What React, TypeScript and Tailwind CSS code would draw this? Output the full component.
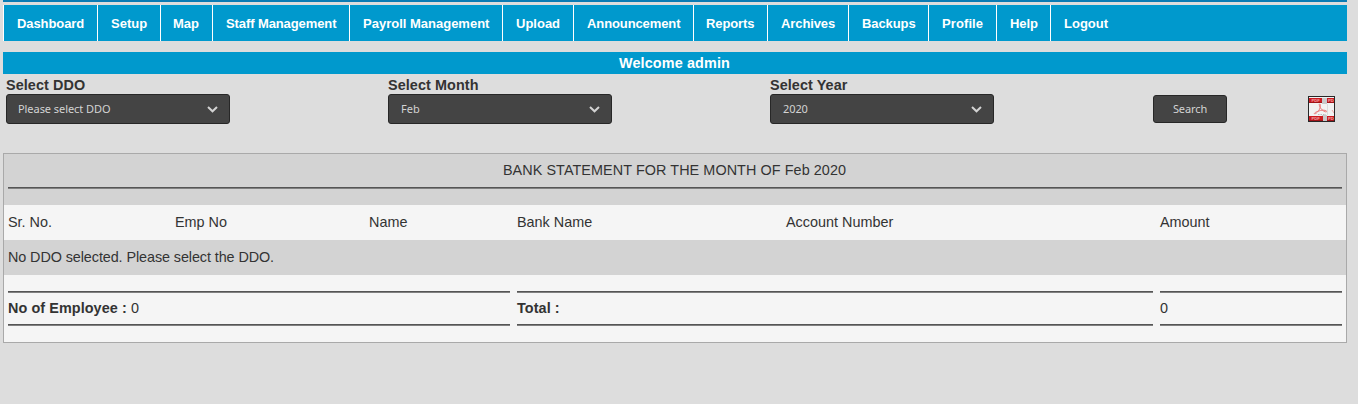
import React from "react";

const menu: { label: string; cls: string }[] = [
  { label: "Dashboard", cls: "w-[94px] pl-[13px] tracking-[-0.08px]" },
  { label: "Setup", cls: "w-[63px] pl-[13px]" },
  { label: "Map", cls: "w-[52px] pl-3" },
  { label: "Staff Management", cls: "w-[137px] pl-[13px] tracking-[-0.1px]" },
  { label: "Payroll Management", cls: "w-[153px] pl-[13px]" },
  { label: "Upload", cls: "w-[71px] pl-[13px]" },
  { label: "Announcement", cls: "w-[120px] pl-[13px] tracking-[-0.1px]" },
  { label: "Reports", cls: "w-[74px] pl-3 tracking-[-0.1px]" },
  { label: "Archives", cls: "w-[81px] pl-[13px] tracking-[-0.1px]" },
  { label: "Backups", cls: "w-[80px] pl-[13px] tracking-[-0.08px]" },
  { label: "Profile", cls: "w-[68px] pl-[13px] tracking-[0.1px]" },
  { label: "Help", cls: "w-[54px] pl-[13px] tracking-[-0.1px]" },
  { label: "Logout", cls: "w-[90px] pl-[13px]" },
];

function Field({ label, value, cls }: { label: string; value: string; cls: string }) {
  return (
    <div className="w-[382px] shrink-0">
      <div className="h-5 pt-[3px] text-[14.4px] leading-4 font-bold tracking-[0.08px]">{label}</div>
      <button
        className={`flex h-[30px] w-[224px] items-center justify-between rounded-[3px] border border-[#272727] bg-[#444] pr-[11px] font-['Noto_Sans',sans-serif] text-[11px] text-[#d3d3d3] ${cls}`}
      >
        <span>{value}</span>
        <svg width="11" height="7" viewBox="0 0 11 7" fill="none">
          <path d="M1 1 L5.5 5.3 L10 1" stroke="#d3d3d3" strokeWidth="2" />
        </svg>
      </button>
    </div>
  );
}

function Rule() {
  return <div className="h-[2px] border-t border-b border-t-[#555] border-b-[#808080]" />;
}

function PdfLabel({ x, y, width, text }: { x: number; y: number; width: number; text: string }) {
  return (
    <g transform={`translate(${x} ${y})`}>
      <rect width={width} height="5" fill="#cb1a20" />
      <rect y="4" width={width} height="1" fill="#a01318" />
      <text x={width > 10 ? 2.5 : 1} y="4.2" fontSize="4.2" fontWeight="700" fontFamily="Liberation Sans, sans-serif" fill="#efa5a5">
        {text}
      </text>
    </g>
  );
}

function PdfIcon() {
  return (
    <svg width="25" height="24" viewBox="0 0 25 24">
      <rect width="25" height="24" fill="#f2f2f2" />
      <path d="M13 1h5v6h-5zM13 18h5v6h-5z" fill="#c9c9c9" />
      <PdfLabel x={0} y={1} width={13} text="PDF" />
      <PdfLabel x={18} y={1} width={7} text="PD" />
      <PdfLabel x={0} y={19} width={14} text="PDF" />
      <PdfLabel x={18} y={19} width={7} text="PD" />
      <path
        d="M10.5 7 C11.5 6.5 11.5 9 11 11 C10 14 7 17 5.5 16.8 C4.5 16 9 13.8 13 13.2 C16 13 18.5 13.8 17.5 14.8 C16 15.5 12 12.5 11 10 C10.2 8 10 7.4 10.5 7"
        fill="none"
        stroke="#ea7a7a"
        strokeWidth="1"
      />
      <path d="M9 17.5h8" stroke="#a9a9b3" strokeWidth="0.8" strokeDasharray="1.5 1" />
      <path d="M18.5 7v11" stroke="#dcdcdc" strokeWidth="1" />
      <path d="M23 13l2 3" stroke="#f0a5a5" strokeWidth="1" />
    </svg>
  );
}

function Total({ cls, children }: { cls: string; children: React.ReactNode }) {
  return (
    <div className={cls}>
      <Rule />
      <div className="h-[31px] pt-[7px] leading-4 tracking-[0.08px]">{children}</div>
      <Rule />
    </div>
  );
}

export default function App() {
  return (
    <div className="h-[404px] w-full overflow-hidden bg-[#ddd] pr-[11px] pl-[3px] font-['Liberation_Sans',Arial,sans-serif] text-[14.4px] text-[#333]">
      <div className="h-[2px] bg-[#0a7cb4]" />
      <nav className="mt-[3px] flex h-9 bg-[#0099cd] text-[13px] font-bold text-white">
        {menu.map((m) => (
          <a key={m.label} className={`h-9 shrink-0 border-l border-white leading-[38px] whitespace-nowrap ${m.cls}`}>
            {m.label}
          </a>
        ))}
      </nav>
      <div className="mt-[11px] h-[22px] bg-[#0099cd] pr-px text-center leading-[22px] font-bold tracking-[0.13px] text-white">
        Welcome admin
      </div>

      <div className="flex h-[79px] pl-[3px]">
        <Field label="Select DDO" value="Please select DDO" cls="pl-[11px] tracking-[-0.06px]" />
        <Field label="Select Month" value="Feb" cls="pl-3" />
        <Field label="Select Year" value="2020" cls="pl-3 tracking-[-0.1px]" />
        <button className="mt-[21px] ml-px h-7 w-[74px] shrink-0 rounded-[3px] border border-[#272727] bg-[#444] font-['Noto_Sans',sans-serif] text-[11px] tracking-[-0.1px] text-[#d3d3d3]">
          Search
        </button>
        <button className="mt-[22px] ml-[81px] h-[26px] w-[27px] shrink-0 border border-[#272727]">
          <PdfIcon />
        </button>
      </div>

      <div className="h-[190px] border border-[#a9a9a9] bg-[#f5f5f5]">
        <div className="h-[51px] bg-[#d3d3d3] px-1">
          <div className="h-[33px] pr-px text-center leading-[33px] tracking-[0.07px]">
            BANK STATEMENT FOR THE MONTH OF Feb 2020
          </div>
          <Rule />
        </div>
        <div className="flex h-[35px] pl-1 leading-[35px]">
          <div className="w-[167px]">Sr. No.</div>
          <div className="w-[194px]">Emp No</div>
          <div className="w-[148px]">Name</div>
          <div className="w-[269px]">Bank Name</div>
          <div className="w-[374px]">Account Number</div>
          <div>Amount</div>
        </div>
        <div className="h-[35px] bg-[#d3d3d3] pl-1 leading-[35px] tracking-[-0.09px]">
          No DDO selected. Please select the DDO.
        </div>
        <div className="flex gap-[7px] px-1 pt-4">
          <Total cls="w-[502px]">
            <b>No of Employee :</b> 0
          </Total>
          <Total cls="w-[636px]">
            <b>Total :</b>
          </Total>
          <Total cls="w-[182px]">0</Total>
        </div>
      </div>
    </div>
  );
}
